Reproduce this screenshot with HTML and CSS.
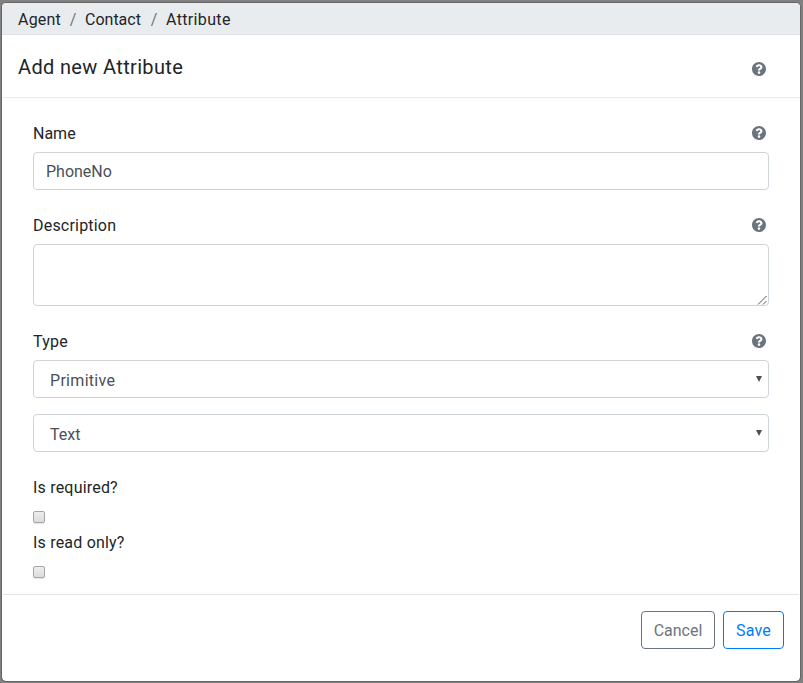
FILE: index.html
```html
<!DOCTYPE html>
<html lang="en">
<head>
<meta charset="utf-8">
<title>Add new Attribute</title>
<link rel="stylesheet" href="styles.css">
</head>
<body>
<svg class="defs" width="0" height="0" aria-hidden="true">
  <symbol id="help" viewBox="8 8 496 496"><path d="M504 256c0 136.997-111.043 248-248 248S8 392.997 8 256C8 119.083 119.043 8 256 8s248 111.083 248 248zM262.655 90c-54.497 0-89.255 22.957-116.549 63.758-3.536 5.286-2.353 12.415 2.715 16.258l34.699 26.31c5.205 3.947 12.621 3.008 16.665-2.122 17.864-22.658 30.113-35.797 57.303-35.797 20.429 0 45.698 13.148 45.698 32.958 0 14.976-12.363 22.667-32.534 33.976C247.128 238.528 216 254.941 216 296v4c0 6.627 5.373 12 12 12h56c6.627 0 12-5.373 12-12v-1.333c0-28.462 83.186-29.647 83.186-106.667 0-58.002-60.165-102-116.531-102zM256 338c-25.365 0-46 20.635-46 46 0 25.364 20.635 46 46 46s46-20.636 46-46c0-25.364-20.635-46-46-46z"/></symbol>
</svg>
<div class="modal">
  <nav class="breadcrumb">
    <span class="crumb crumb-agent">Agent</span><span class="slash">/</span><span class="crumb crumb-contact">Contact</span><span class="slash">/</span><span class="crumb crumb-attribute">Attribute</span>
  </nav>
  <header class="modal-header">
    <h1 class="title">Add new Attribute</h1>
    <svg class="help"><use href="#help"/></svg>
  </header>
  <main class="modal-body">
    <div class="label-row"><span>Name</span><svg class="help"><use href="#help"/></svg></div>
    <div class="control"><span>PhoneNo</span></div>
    <div class="label-row"><span class="spaced">Description</span><svg class="help"><use href="#help"/></svg></div>
    <div class="control textarea"><svg class="grip" viewBox="0 0 10 10"><path d="M1 9.5 9.5 1M6 9.5 9.5 6"/></svg></div>
    <div class="label-row"><span class="spaced">Type</span><svg class="help"><use href="#help"/></svg></div>
    <div class="control select"><span class="wide">Primitive</span><i class="arrow"></i></div>
    <div class="control select second"><span>Text</span><i class="arrow"></i></div>
    <div class="label-row"><span class="spaced">Is required?</span></div>
    <div class="checkbox"></div>
    <div class="label-row tight"><span class="spaced">Is read only?</span></div>
    <div class="checkbox"></div>
  </main>
  <footer class="modal-footer">
    <button class="btn cancel">Cancel</button>
    <button class="btn save">Save</button>
  </footer>
</div>
</body>
</html>
```
FILE: styles.css
```css
* { box-sizing: border-box; }
body {
  margin: 0;
  height: 683px;
  padding: 2px 2px 1px 1px;
  overflow: hidden;
  background: #808080;
  color: #212529;
  font: 16px/24px Roboto, sans-serif;
}
.defs { display: block; }
.modal {
  height: 680px;
  border: 1px solid #666;
  border-radius: 5px;
  background: #fff;
  background-clip: padding-box;
  overflow: hidden;
}
.breadcrumb {
  display: flex;
  height: 32px;
  padding: 5px 16px 2px;
  border-bottom: 1px solid #dee2e6;
  background: #e9ecef;
}
.crumb { white-space: nowrap; }
.crumb-agent { width: 43px; letter-spacing: 0.2px; }
.crumb-contact { width: 57px; }
.crumb-attribute { letter-spacing: 0.35px; }
.slash { width: 24px; text-align: center; color: #6c757d; }
.modal-header {
  display: flex;
  justify-content: space-between;
  align-items: center;
  height: 63px;
  padding: 6px 34px 0 16px;
  border-bottom: 1px solid #e9ecef;
}
.title { margin: 0 0 4px; font-size: 20px; line-height: 30px; font-weight: 400; letter-spacing: 0.35px; }
.help { display: block; width: 14px; height: 14px; fill: #6c757d; }
.modal-body { display: flow-root; height: 496px; padding: 0 31px; }
.label-row {
  display: flex;
  justify-content: space-between;
  align-items: center;
  height: 24px;
  margin: 23px 0 7px;
  padding-right: 3px;
}
.label-row.tight { margin-top: 7px; }
.label-row span { padding-top: 2px; }
.spaced { letter-spacing: 0.2px; }
.wide { letter-spacing: 0.3px; }
.control {
  display: flex;
  align-items: center;
  height: 38px;
  padding: 2px 12px 0;
  border: 1px solid #ced4da;
  border-radius: 4px;
  color: #495057;
}
.textarea { height: 62px; padding: 0 1px 0 0; justify-content: flex-end; align-items: flex-end; }
.grip { width: 10px; height: 10px; fill: none; stroke: #555; stroke-width: 1; }
.select { justify-content: space-between; padding: 4px 6px 0 16px; }
.second { margin-top: 16px; }
.arrow {
  margin-bottom: 5px;
  border: solid transparent;
  border-width: 6px 3px 0;
  border-top-color: #495057;
}
.checkbox {
  width: 12px;
  height: 12px;
  margin-top: 12px;
  border: 1px solid #a6a6a6;
  border-radius: 2px;
  background: linear-gradient(#eee, #dcdcdc);
  box-shadow: 0 1px 1px #e4e4e4;
}
.modal-footer {
  display: flex;
  justify-content: flex-end;
  gap: 8px;
  height: 87px;
  margin: 0 1px;
  padding: 16px 15px 0;
  border-top: 1px solid #e2e5e8;
}
.btn {
  height: 38px;
  padding: 1px 0 0;
  border: 1px solid;
  border-radius: 4px;
  background: #fff;
  font: inherit;
}
.cancel { width: 74px; color: #6c757d; }
.save { width: 61px; color: #007bff; letter-spacing: 0.2px; }
```
